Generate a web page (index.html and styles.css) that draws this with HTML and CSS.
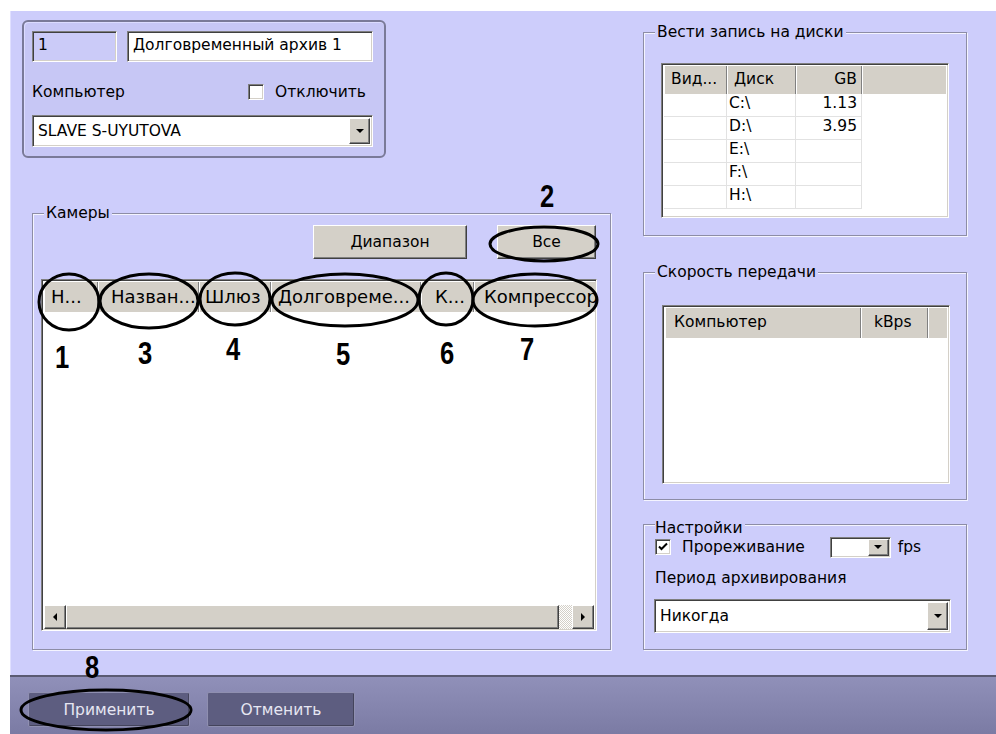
FILE: index.html
```html
<!DOCTYPE html>
<html lang="ru">
<head>
<meta charset="utf-8">
<title>Долговременный архив</title>
<link rel="stylesheet" href="styles.css">
</head>
<body>
<div class="page">
  <div class="window">
    <div class="panel">
      <div class="col-left">
        <div class="idbox">
          <div class="id-row">
            <div class="field field-id">1</div>
            <div class="field field-name">Долговременный архив 1</div>
          </div>
          <div class="pc-row">
            <span class="lbl">Компьютер</span>
            <span class="chk"><span class="chk-box"></span><span>Отключить</span></span>
          </div>
          <div class="combo combo-pc">
            <span class="combo-text">SLAVE S-UYUTOVA</span>
            <span class="combo-btn"><span class="tri-down"></span></span>
          </div>
        </div>

        <div class="group cams">
          <span class="group-title">Камеры</span>
          <div class="cam-buttons">
            <div class="btn btn-range">Диапазон</div>
            <div class="btn btn-all">Все</div>
          </div>
          <div class="listview cam-list">
            <div class="lv-header">
              <div class="hcell w-n">Н...</div>
              <div class="hcell w-name">Назван...</div>
              <div class="hcell w-gw">Шлюз</div>
              <div class="hcell w-arch">Долговреме...</div>
              <div class="hcell w-k">К...</div>
              <div class="hcell w-comp">Компрессор</div>
            </div>
            <div class="lv-body"></div>
            <div class="hscroll">
              <div class="sb-btn"><span class="tri-left"></span></div>
              <div class="sb-thumb"></div>
              <div class="sb-track"></div>
              <div class="sb-btn"><span class="tri-right"></span></div>
            </div>
          </div>
        </div>
      </div>

      <div class="col-right">
        <div class="group disks">
          <span class="group-title">Вести запись на диски</span>
          <div class="listview disk-list">
            <div class="lv-header">
              <div class="hcell d-c1">Вид...</div>
              <div class="hcell d-c2">Диск</div>
              <div class="hcell d-c3 num">GB</div>
              <div class="hcell fill"></div>
            </div>
            <div class="disk-rows">
              <div class="drow"><span class="d-c1"></span><span class="d-c2">C:\</span><span class="d-c3 num">1.13</span></div>
              <div class="drow"><span class="d-c1"></span><span class="d-c2">D:\</span><span class="d-c3 num">3.95</span></div>
              <div class="drow"><span class="d-c1"></span><span class="d-c2">E:\</span><span class="d-c3 num"></span></div>
              <div class="drow"><span class="d-c1"></span><span class="d-c2">F:\</span><span class="d-c3 num"></span></div>
              <div class="drow"><span class="d-c1"></span><span class="d-c2">H:\</span><span class="d-c3 num"></span></div>
            </div>
          </div>
        </div>

        <div class="group speed">
          <span class="group-title">Скорость передачи</span>
          <div class="listview speed-list">
            <div class="lv-header">
              <div class="hcell s-c1">Компьютер</div>
              <div class="hcell s-c2">kBps</div>
              <div class="hcell fill"></div>
            </div>
          </div>
        </div>

        <div class="group settings">
          <span class="group-title">Настройки</span>
          <div class="thin-row">
            <span class="chk"><span class="chk-box checked"><svg viewBox="0 0 12 12" width="12" height="12"><path d="M2 5.5 L4.5 8 L10 2.5" fill="none" stroke="#000" stroke-width="2"/></svg></span><span>Прореживание</span></span>
            <div class="combo combo-fps"><span class="combo-text"></span><span class="combo-btn"><span class="tri-down"></span></span></div>
            <span class="fps">fps</span>
          </div>
          <div class="period-lbl">Период архивирования</div>
          <div class="combo combo-period">
            <span class="combo-text">Никогда</span>
            <span class="combo-btn"><span class="tri-down"></span></span>
          </div>
        </div>
      </div>
    </div>
    <div class="bottombar">
      <div class="dbtn btn-apply">Применить</div>
      <div class="dbtn btn-cancel">Отменить</div>
    </div>
  </div>

  <svg class="annot" width="996" height="734" viewBox="0 0 996 734">
    <g fill="none" stroke="#000" stroke-width="3">
      <ellipse cx="69" cy="302" rx="30" ry="28"/>
      <ellipse cx="149" cy="301" rx="49" ry="27"/>
      <ellipse cx="235" cy="299" rx="35" ry="26"/>
      <ellipse cx="345" cy="300" rx="73" ry="26"/>
      <ellipse cx="446" cy="299" rx="27" ry="26"/>
      <ellipse cx="535" cy="300" rx="62" ry="26"/>
      <ellipse cx="544" cy="244" rx="54" ry="17"/>
      <ellipse cx="106" cy="710" rx="85" ry="20"/>
    </g>
    <g class="nums">
      <text transform="translate(62 368) scale(0.8 1)">1</text>
      <text transform="translate(547 207) scale(0.8 1)">2</text>
      <text transform="translate(145 364) scale(0.8 1)">3</text>
      <text transform="translate(233 360) scale(0.8 1)">4</text>
      <text transform="translate(343 365) scale(0.8 1)">5</text>
      <text transform="translate(447 364) scale(0.8 1)">6</text>
      <text transform="translate(527 360) scale(0.8 1)">7</text>
      <text transform="translate(92 678) scale(0.8 1)">8</text>
    </g>
  </svg>
</div>
</body>
</html>
```

FILE: styles.css
```css
* { box-sizing: border-box; }
html, body { margin: 0; padding: 0; background: #fff; }
body {
  font-family: "DejaVu Sans", "Liberation Sans", sans-serif;
  font-size: 15.5px;
  color: #000;
}
.page {
  position: relative;
  width: 996px;
  height: 734px;
  padding: 11px 0 0 10px;
  overflow: hidden;
}
.window { width: 986px; height: 723px; display: flex; flex-direction: column; }
.panel {
  height: 664px;
  background: #cdcdfb;
  display: flex;
  border-left: 1px solid #e0e0ff;
}
.col-left { width: 600px; padding: 9px 0 0 11px; display: flex; flex-direction: column; }
.col-right { width: 324px; margin-left: 32px; padding-top: 21px; display: flex; flex-direction: column; }

/* top-left box */
.idbox {
  width: 364px;
  height: 138px;
  border: 2px solid #7a7a98;
  border-radius: 6px;
  background: #c7c7f5;
  padding: 9px 11px 0 8px;
  box-shadow: inset 1px 1px 0 #dcdcff;
}
.id-row { display: flex; gap: 10px; height: 31px; }
.field {
  height: 31px;
  padding: 0 5px;
  line-height: 27px;
  border-top: 1px solid #7f7f7f;
  border-left: 1px solid #7f7f7f;
  border-bottom: 1px solid #fff;
  border-right: 1px solid #fff;
  box-shadow: inset 1px 1px 0 #404040, inset -1px -1px 0 #d4d0c8;
  white-space: nowrap;
  overflow: hidden;
}
.field-id { width: 85px; background: #cbcbf8; }
.field-name { width: 246px; background: #fff; }
.pc-row {
  display: flex;
  justify-content: space-between;
  align-items: center;
  height: 32px;
  margin-top: 14px;
  padding-right: 7px;
}
.chk { display: inline-flex; align-items: center; gap: 11px; }
.chk-box {
  width: 16px; height: 16px;
  background: #fff;
  border-top: 1px solid #7f7f7f;
  border-left: 1px solid #7f7f7f;
  border-bottom: 1px solid #fff;
  border-right: 1px solid #fff;
  box-shadow: inset 1px 1px 0 #404040, inset -1px -1px 0 #d4d0c8;
  display: inline-flex; align-items: center; justify-content: center;
}
.combo {
  display: flex;
  align-items: center;
  background: #fff;
  border-top: 1px solid #7f7f7f;
  border-left: 1px solid #7f7f7f;
  border-bottom: 1px solid #fff;
  border-right: 1px solid #fff;
  box-shadow: inset 1px 1px 0 #404040, inset -1px -1px 0 #d4d0c8;
  padding: 2px;
}
.combo-text { flex: 1; padding-left: 3px; white-space: nowrap; }
.combo-btn {
  align-self: stretch;
  width: 21px;
  background: #d4d0c8;
  border-top: 1px solid #fff;
  border-left: 1px solid #fff;
  border-right: 1px solid #404040;
  border-bottom: 1px solid #404040;
  box-shadow: inset -1px -1px 0 #808080;
  display: flex; align-items: center; justify-content: center;
}
.tri-down { width: 0; height: 0; border-left: 4px solid transparent; border-right: 4px solid transparent; border-top: 4px solid #000; }
.tri-left { width: 0; height: 0; border-top: 4px solid transparent; border-bottom: 4px solid transparent; border-right: 4px solid #000; }
.tri-right { width: 0; height: 0; border-top: 4px solid transparent; border-bottom: 4px solid transparent; border-left: 4px solid #000; }
.combo-pc { height: 32px; margin-top: 7px; }

/* group boxes */
.group {
  border: 1px solid #8d8da6;
  box-shadow: 1px 1px 0 #f4f4ff, inset 1px 1px 0 #f4f4ff;
  display: flex;
  flex-direction: column;
}
.group-title {
  display: block;
  width: max-content;
  height: 18px;
  line-height: 18px;
  margin: -10px 0 0 11px;
  padding: 0 2px;
  background: #cdcdfb;
}
.cams { width: 579px; height: 437px; margin: 55px 0 0 10px; }
.cam-buttons { display: flex; justify-content: flex-end; gap: 30px; padding-right: 14px; margin-top: 3px; }
.btn {
  height: 34px;
  background: #d4d0c8;
  border-top: 1px solid #fff;
  border-left: 1px solid #fff;
  border-right: 1px solid #404040;
  border-bottom: 1px solid #404040;
  box-shadow: inset -1px -1px 0 #808080;
  display: flex; align-items: center; justify-content: center;
}
.btn-range { width: 154px; }
.btn-all { width: 99px; }

.listview {
  background: #fff;
  border-top: 1px solid #7f7f7f;
  border-left: 1px solid #7f7f7f;
  border-bottom: 1px solid #fff;
  border-right: 1px solid #fff;
  box-shadow: inset 1px 1px 0 #404040, inset -1px -1px 0 #d4d0c8;
  padding: 2px 2px 1px 2px;
  display: flex;
  flex-direction: column;
  overflow: hidden;
}
.lv-header { display: flex; height: 30px; flex: none; background: #d4d0c8; }
.hcell {
  flex: none;
  height: 100%;
  background: #d4d0c8;
  border-left: 1px solid #fff;
  border-right: 1px solid #808080;
  box-shadow: 1px 0 0 #404040;
  line-height: 28px;
  padding-left: 6px;
  white-space: nowrap;
  overflow: hidden;
}
.hcell.fill { flex: 1; box-shadow: none; border-right: 0; }
.hcell.num { text-align: right; padding: 0 4px 0 0; }

.cam-list { width: 556px; height: 352px; margin: 20px 0 0 8px; }
.cam-list .hcell { font-size: 18px; line-height: 29px; }
.w-n { width: 54px; }
.w-name { width: 101px; padding-left: 12px; }
.w-gw { width: 72px; padding-left: 5px; }
.w-arch { width: 150px; }
.w-k { width: 53px; padding-left: 13px; }
.w-comp { width: 130px; padding-left: 9px; }
.lv-body { flex: 1; }
.hscroll { height: 24px; display: flex; flex: none; }
.sb-btn {
  width: 22px;
  background: #d4d0c8;
  border-top: 1px solid #fff;
  border-left: 1px solid #fff;
  border-right: 1px solid #404040;
  border-bottom: 1px solid #404040;
  box-shadow: inset -1px -1px 0 #808080;
  display: flex; align-items: center; justify-content: center;
}
.sb-thumb {
  flex: 1;
  background: #d4d0c8;
  border-top: 1px solid #fff;
  border-left: 1px solid #fff;
  border-right: 1px solid #404040;
  border-bottom: 1px solid #404040;
  box-shadow: inset -1px -1px 0 #808080;
}
.sb-track {
  width: 13px;
  background: repeating-conic-gradient(#fff 0 25%, #d4d0c8 0 50%) 0 0 / 2px 2px;
}

/* right side */
.disks { height: 204px; }
.disk-list { width: 288px; height: 155px; margin: 22px 0 0 17px; }
.disk-list .lv-header { height: 28px; }
.disk-list .hcell { line-height: 26px; }
.d-c1 { width: 63px; }
.d-c2 { width: 69px; }
.d-c3 { width: 66px; }
.disk-rows { display: flex; flex-direction: column; }
.drow { display: flex; height: 23px; line-height: 18px; }
.drow span {
  flex: none;
  border-right: 1px solid #e2e2e2;
  border-bottom: 1px solid #e2e2e2;
  padding-left: 2px;
}
.drow .num { text-align: right; padding: 0 4px 0 0; }

.speed { height: 228px; margin-top: 36px; }
.speed-list { width: 288px; height: 179px; margin: 24px 0 0 18px; }
.s-c1 { width: 196px; padding-left: 8px; }
.s-c2 { width: 67px; padding-left: 12px; }

.settings { height: 126px; margin-top: 24px; padding: 0 0 0 11px; }
.settings .group-title { margin-left: 0; padding-left: 0; line-height: 16px; height: 16px; margin-top: -5px; }
.thin-row { display: flex; align-items: center; height: 22px; margin-top: 0; }
.settings .chk { gap: 11px; }
.combo-fps { width: 61px; height: 21px; margin-left: 25px; padding: 1px; }
.fps { margin-left: 7px; }
.period-lbl { margin-top: 10px; line-height: 20px; }
.combo-period { width: 297px; height: 34px; margin-top: 11px; margin-left: -1px; }

/* bottom bar */
.bottombar {
  height: 59px;
  background: linear-gradient(#9090b9, #7b7ba4);
  border-top: 2px solid #5a5a72;
  display: flex;
  gap: 17px;
  padding: 15px 0 0 18px;
}
.dbtn {
  height: 35px;
  background: #5d5d80;
  border: 1px solid #8f8fb0;
  border-radius: 2px;
  box-shadow: inset -1px -1px 0 #44445c;
  color: #e6e6f2;
  display: flex; align-items: center; justify-content: center;
}
.btn-apply { width: 162px; }
.btn-cancel { width: 148px; }

/* annotation overlay */
.annot { position: absolute; left: 0; top: 0; pointer-events: none; }
.nums text {
  font-family: "Liberation Sans", "DejaVu Sans", sans-serif;
  font-weight: bold;
  font-size: 32px;
  text-anchor: middle;
  fill: #000;
}
```
